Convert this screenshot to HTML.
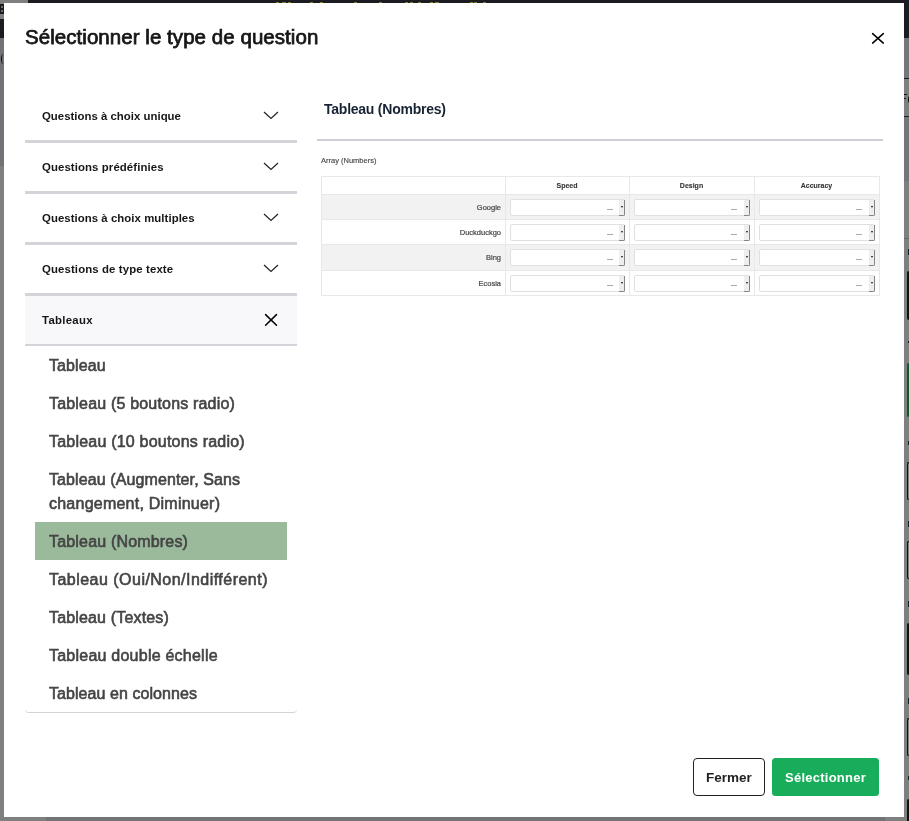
<!DOCTYPE html>
<html><head><meta charset="utf-8">
<style>
*{margin:0;padding:0;box-sizing:border-box}
html,body{width:909px;height:821px;overflow:hidden;background:#7f7f7f;font-family:"Liberation Sans",sans-serif}
.a{position:absolute}
.t{position:absolute;white-space:nowrap;line-height:1;will-change:transform}
.th{font-size:7px;font-weight:bold;color:#333;-webkit-text-stroke:0.1px #333;text-align:center;margin-top:0.5px}
.tl{font-size:7.5px;color:#444;-webkit-text-stroke:0.2px #444;text-align:right;margin-top:0.5px}
.inp{height:17px;background:#fff;border:1px solid #e0e0e0;border-radius:2px}
.inp i{position:absolute;right:-1px;top:0;bottom:-1px;width:6px;background:#eee;border-right:1px solid #858585;border-bottom:1px solid #858585;border-radius:0 0 2px 0}
.inp b{position:absolute;left:1.8px;top:6px;width:0;height:0;border-left:1.5px solid transparent;border-right:1.5px solid transparent;border-top:2px solid #111}
.inp s{position:absolute;left:96px;top:9px;width:6px;height:1px;background:#aaa}
</style></head><body>
<!-- background strips -->
<div class="a" style="left:28px;top:0;width:881px;height:3px;background:#1b1c21"></div>
<div class="a" style="left:0;top:4px;width:4px;height:10px;background:#1b1c21"></div>
<div class="a" style="left:0;top:19px;width:4px;height:19px;background:#1b1c21"></div>
<div class="a" style="left:904px;top:0;width:5px;height:38px;background:#1b1c21"></div>
<div class="a" style="left:904px;top:238px;width:5px;height:1px;background:#6a6a6a"></div>
<div class="a" style="left:908px;top:249px;width:1px;height:6px;background:#1b1c21"></div>
<div class="a" style="left:907px;top:271px;width:2px;height:49px;background:#111;border-radius:2px 0 0 2px"></div>
<div class="a" style="left:908px;top:341px;width:1px;height:2px;background:#1b1c21"></div>
<div class="a" style="left:907px;top:363px;width:2px;height:54px;background:#0b5a2e;border-radius:2px 0 0 2px"></div>
<div class="a" style="left:908px;top:441px;width:1px;height:4px;background:#1b1c21"></div>
<div class="a" style="left:907px;top:462px;width:2px;height:38px;border:1px solid #111;border-right:0;border-radius:2px 0 0 2px"></div>
<div class="a" style="left:908px;top:521px;width:1px;height:6px;background:#1b1c21"></div>
<div class="a" style="left:907px;top:541px;width:2px;height:38px;border:1px solid #111;border-right:0;border-radius:2px 0 0 2px"></div>
<div class="a" style="left:908px;top:601px;width:1px;height:6px;background:#1b1c21"></div>
<div class="a" style="left:907px;top:623px;width:2px;height:52px;background:#111;border-radius:2px 0 0 2px"></div>
<div class="a" style="left:908px;top:698px;width:1px;height:6px;background:#1b1c21"></div>
<div class="a" style="left:907px;top:718px;width:2px;height:38px;border:1px solid #111;border-right:0;border-radius:2px 0 0 2px"></div>
<div class="a" style="left:908px;top:776px;width:1px;height:4px;background:#1b1c21"></div>
<div class="a" style="left:907px;top:799px;width:2px;height:22px;background:#111;border-radius:2px 0 0 0"></div>
<div class="a" style="left:46px;top:817px;width:839px;height:4px;background:#737277"></div>
<div class="a" style="left:0;top:38px;width:4px;height:128px;background:#737276"></div>
<div class="a" style="left:1px;top:54px;width:5px;height:10px;border-left:1.4px solid #111;border-radius:50%/50%"></div>
<div class="a" style="left:904px;top:38px;width:5px;height:40px;background:#767579"></div>
<div class="a" style="left:904px;top:116px;width:5px;height:65px;background:#757478"></div>
<div class="a" style="left:904px;top:93.5px;width:2.5px;height:1.5px;background:#111"></div>
<div class="a" style="left:904px;top:97.5px;width:2px;height:1.5px;background:#111"></div>
<div class="a" style="left:908px;top:96px;width:3px;height:6.5px;border-left:1.3px solid #111;border-radius:50%/50%"></div>
<div class="a" style="left:1px;top:6px;width:2px;height:2px;background:#888;border-radius:1px"></div>
<div class="a" style="left:1px;top:10px;width:2px;height:2px;background:#888;border-radius:1px"></div>

<div class="a" style="left:904px;top:78px;width:5px;height:1px;background:#1b1c21"></div>
<div class="a" style="left:904px;top:116px;width:5px;height:1px;background:#1b1c21"></div>
<div class="a" style="left:276px;top:1.5px;width:3px;height:1.5px;background:#8a7828"></div>
<div class="a" style="left:282px;top:1.5px;width:4px;height:1.5px;background:#8a7828"></div>
<div class="a" style="left:288px;top:1.5px;width:2.5px;height:1.5px;background:#8a7828"></div>
<div class="a" style="left:310px;top:1.5px;width:3px;height:1.5px;background:#8a7828"></div>
<div class="a" style="left:320px;top:1.5px;width:3px;height:1.5px;background:#8a7828"></div>
<div class="a" style="left:354px;top:1.5px;width:3px;height:1.5px;background:#8a7828"></div>
<div class="a" style="left:379px;top:1.5px;width:3px;height:1.5px;background:#8a7828"></div>
<div class="a" style="left:405px;top:1.5px;width:3px;height:1.5px;background:#8a7828"></div>
<div class="a" style="left:410px;top:1.5px;width:3px;height:1.5px;background:#8a7828"></div>
<div class="a" style="left:418px;top:1.5px;width:3px;height:1.5px;background:#8a7828"></div>
<div class="a" style="left:430px;top:1.5px;width:3px;height:1.5px;background:#8a7828"></div>
<div class="a" style="left:435px;top:1.5px;width:4px;height:1.5px;background:#8a7828"></div>
<div class="a" style="left:470px;top:1.5px;width:3px;height:1.5px;background:#8a7828"></div>
<div class="a" style="left:474px;top:1.5px;width:3px;height:1.5px;background:#8a7828"></div>
<div class="a" style="left:483px;top:1.5px;width:3px;height:1.5px;background:#8a7828"></div>
<!-- modal -->
<div class="a" style="left:4px;top:3px;width:900px;height:814px;background:#fff"></div>

<!-- title -->
<div class="t" id="title" style="left:25px;top:27px;font-size:20.5px;color:#161616;-webkit-text-stroke:0.75px #161616;letter-spacing:0.05px">Sélectionner le type de question</div>
<svg class="a" style="left:866px;top:27px" width="24" height="24" viewBox="866 27 24 24"><path d="M872.6 33.6L883.3 43.1M883.3 33.6L872.6 43.1" stroke="#000" stroke-width="1.5" stroke-linecap="round" fill="none"/></svg>

<!-- accordion -->
<div class="a" style="left:25px;top:92px;width:272px;height:48px;border-bottom:3px solid #d3d4d9;height:51px"></div>
<div class="a" style="left:25px;top:143px;width:272px;height:51px;border-bottom:3px solid #d3d4d9"></div>
<div class="a" style="left:25px;top:194px;width:272px;height:51px;border-bottom:3px solid #d3d4d9"></div>
<div class="a" style="left:25px;top:245px;width:272px;height:51px;border-bottom:3px solid #d3d4d9"></div>
<div class="a" style="left:25px;top:296px;width:272px;height:50px;background:#f8f8fa;border-bottom:2px solid #d3d4d9"></div>

<div class="t" style="left:42px;top:111px;font-size:11.4px;font-weight:bold;color:#161616;letter-spacing:0.013px">Questions à choix unique</div>
<div class="t" style="left:42px;top:162px;font-size:11.4px;font-weight:bold;color:#161616;letter-spacing:0.095px">Questions prédéfinies</div>
<div class="t" style="left:42px;top:213px;font-size:11.4px;font-weight:bold;color:#161616;letter-spacing:0.050px">Questions à choix multiples</div>
<div class="t" style="left:42px;top:264px;font-size:11.4px;font-weight:bold;color:#161616;letter-spacing:0.118px">Questions de type texte</div>
<div class="t" style="left:42px;top:315px;font-size:11.4px;font-weight:bold;color:#161616;letter-spacing:0.286px">Tableaux</div>

<svg class="a" style="left:0;top:0" width="909" height="821" viewBox="0 0 909 821">
<g stroke="#222" stroke-width="1.2" fill="none">
<path d="M264 112L271 118.5L278 112"/>
<path d="M264 163L271 169.5L278 163"/>
<path d="M264 214L271 220.5L278 214"/>
<path d="M264 265L271 271.5L278 265"/>
</g>
<path d="M265.6 314.6L276.5 325.3M276.5 314.6L265.6 325.3" stroke="#000" stroke-width="1.5" stroke-linecap="round" fill="none"/>
</svg>

<!-- list -->
<div class="a" style="left:25px;top:600px;width:272px;height:113px;border-bottom:1px solid #d3d4d9;border-radius:0 0 4px 4px"></div>
<div class="a" style="left:35px;top:522px;width:252px;height:38px;background:#9bb99b"></div>
<div class="t" style="left:49px;top:358px;font-size:16px;color:#444;-webkit-text-stroke:0.6px #444;letter-spacing:0.100px">Tableau</div>
<div class="t" style="left:49px;top:396px;font-size:16px;color:#444;-webkit-text-stroke:0.6px #444;letter-spacing:0.183px">Tableau (5 boutons radio)</div>
<div class="t" style="left:49px;top:434px;font-size:16px;color:#444;-webkit-text-stroke:0.6px #444;letter-spacing:0.212px">Tableau (10 boutons radio)</div>
<div class="t" style="left:49px;top:472px;font-size:16px;color:#444;-webkit-text-stroke:0.6px #444;letter-spacing:0.109px">Tableau (Augmenter, Sans</div>
<div class="t" style="left:49px;top:496px;font-size:16px;color:#444;-webkit-text-stroke:0.6px #444;letter-spacing:0.235px">changement, Diminuer)</div>
<div class="t" style="left:49px;top:534px;font-size:16px;color:#444;-webkit-text-stroke:0.6px #444;letter-spacing:0.181px">Tableau (Nombres)</div>
<div class="t" style="left:49px;top:572px;font-size:16px;color:#444;-webkit-text-stroke:0.6px #444;letter-spacing:0.475px">Tableau (Oui/Non/Indifférent)</div>
<div class="t" style="left:49px;top:610px;font-size:16px;color:#444;-webkit-text-stroke:0.6px #444;letter-spacing:0.160px">Tableau (Textes)</div>
<div class="t" style="left:49px;top:648px;font-size:16px;color:#444;-webkit-text-stroke:0.6px #444;letter-spacing:0.233px">Tableau double échelle</div>
<div class="t" style="left:49px;top:686px;font-size:16px;color:#444;-webkit-text-stroke:0.6px #444;letter-spacing:0.061px">Tableau en colonnes</div>

<!-- preview -->
<div class="t" style="left:324px;top:102px;font-size:14px;font-weight:bold;color:#172333;letter-spacing:-0.24px">Tableau (Nombres)</div>
<div class="a" style="left:317px;top:139px;width:566px;height:2px;background:#cfd0d5"></div>
<div class="t" style="left:321px;top:157px;font-size:7.5px;color:#4a4a4a;-webkit-text-stroke:0.15px #4a4a4a">Array (Numbers)</div>

<!-- table -->
<div class="a" style="left:321px;top:194px;width:558px;height:25px;background:#f2f2f2"></div>
<div class="a" style="left:321px;top:244px;width:558px;height:26px;background:#f2f2f2"></div>
<div class="a" style="left:321px;top:176px;width:559px;height:1px;background:#e8e8e8"></div>
<div class="a" style="left:321px;top:194px;width:559px;height:1px;background:#e8e8e8"></div>
<div class="a" style="left:321px;top:219px;width:559px;height:1px;background:#e8e8e8"></div>
<div class="a" style="left:321px;top:244px;width:559px;height:1px;background:#e8e8e8"></div>
<div class="a" style="left:321px;top:270px;width:559px;height:1px;background:#e8e8e8"></div>
<div class="a" style="left:321px;top:295px;width:559px;height:1px;background:#e8e8e8"></div>
<div class="a" style="left:321px;top:176px;width:1px;height:120px;background:#e8e8e8"></div>
<div class="a" style="left:505px;top:176px;width:1px;height:120px;background:#e8e8e8"></div>
<div class="a" style="left:629px;top:176px;width:1px;height:120px;background:#e8e8e8"></div>
<div class="a" style="left:754px;top:176px;width:1px;height:120px;background:#e8e8e8"></div>
<div class="a" style="left:879px;top:176px;width:1px;height:120px;background:#e8e8e8"></div>
<div class="t th" style="left:505px;width:124px;top:181px">Speed</div>
<div class="t th" style="left:629px;width:125px;top:181px">Design</div>
<div class="t th" style="left:754px;width:125px;top:181px">Accuracy</div>
<div class="t tl" style="left:321px;width:180px;top:203px">Google</div>
<div class="a inp" style="left:510px;top:199px;width:115px"><i><b></b></i><s></s></div>
<div class="a inp" style="left:634px;top:199px;width:116px"><i><b></b></i><s></s></div>
<div class="a inp" style="left:759px;top:199px;width:116px"><i><b></b></i><s></s></div>
<div class="t tl" style="left:321px;width:180px;top:228px">Duckduckgo</div>
<div class="a inp" style="left:510px;top:224px;width:115px"><i><b></b></i><s></s></div>
<div class="a inp" style="left:634px;top:224px;width:116px"><i><b></b></i><s></s></div>
<div class="a inp" style="left:759px;top:224px;width:116px"><i><b></b></i><s></s></div>
<div class="t tl" style="left:321px;width:180px;top:253px">Bing</div>
<div class="a inp" style="left:510px;top:249px;width:115px"><i><b></b></i><s></s></div>
<div class="a inp" style="left:634px;top:249px;width:116px"><i><b></b></i><s></s></div>
<div class="a inp" style="left:759px;top:249px;width:116px"><i><b></b></i><s></s></div>
<div class="t tl" style="left:321px;width:180px;top:279px">Ecosia</div>
<div class="a inp" style="left:510px;top:275px;width:115px"><i><b></b></i><s></s></div>
<div class="a inp" style="left:634px;top:275px;width:116px"><i><b></b></i><s></s></div>
<div class="a inp" style="left:759px;top:275px;width:116px"><i><b></b></i><s></s></div>

<!-- buttons -->
<div class="a" style="left:693px;top:758px;width:72px;height:38px;border:1px solid #222;border-radius:4px"></div>
<div class="t" style="left:706px;top:771px;font-size:13.5px;font-weight:bold;color:#222">Fermer</div>
<div class="a" style="left:772px;top:758px;width:107px;height:38px;background:#17ad5b;border-radius:3.5px"></div>
<div class="t" style="left:785px;top:771px;font-size:13px;font-weight:bold;color:#fff;letter-spacing:0.25px">Sélectionner</div>
</body></html>
